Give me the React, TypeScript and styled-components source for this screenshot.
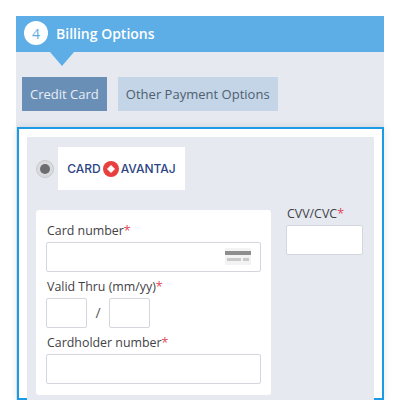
import React from 'react';
import styled, { createGlobalStyle } from 'styled-components';

const Global = createGlobalStyle`
    html, body {
        margin: 0;
        height: 400px;
        overflow: hidden;
        background: #fff;
        font-family: "Open Sans", "Liberation Sans", sans-serif;
    }
`;

const Panel = styled.section`
    margin: 16px 16px 0;
    height: 384px;
    background: #e6e9ef;
`;

const Header = styled.header`
    position: relative;
    height: 36px;
    box-sizing: border-box;
    padding: 0 0 2px 8px;
    display: flex;
    align-items: center;
    gap: 8px;
    background: #5dade6;
    color: #fff;
    font-size: 14px;
    font-weight: 600;

    &::after {
        content: '';
        position: absolute;
        left: 34px;
        top: 36px;
        border-left: 12.5px solid transparent;
        border-right: 12.5px solid transparent;
        border-top: 14px solid #5dade6;
    }
`;

const StepBadge = styled.span`
    width: 24px;
    height: 24px;
    border-radius: 50%;
    background: #fff;
    color: #5dade6;
    font-size: 14px;
    font-weight: 400;
    display: flex;
    align-items: center;
    justify-content: center;
`;

const Tabs = styled.nav`
    display: flex;
    gap: 11px;
    padding: 25px 0 16px 6px;
`;

const Tab = styled.div<{ $active?: boolean }>`
    height: 34px;
    padding: 0 8px;
    display: flex;
    align-items: center;
    font-size: 13px;
    letter-spacing: 0.01px;
    background: ${(p) => (p.$active ? '#6a8fb6' : '#c3d5e7')};
    color: ${(p) => (p.$active ? '#e8eef5' : '#4f5f70')};
`;

const Outline = styled.div`
    margin-left: 1px;
    height: 273px;
    box-sizing: border-box;
    border: 2px solid #1b9ae6;
    background: #fff;
    padding: 8px 8px 0;
    box-shadow: 0 0 8px rgba(0, 0, 0, 0.1);
`;

const Inner = styled.div`
    height: 263px;
    background: #e6e9ef;
    padding: 10px 11px 0 9px;
`;

const LogoRow = styled.div`
    display: flex;
    align-items: center;
    gap: 4px;
    margin-bottom: 20px;
`;

const Radio = styled.span`
    width: 18px;
    height: 18px;
    box-sizing: border-box;
    border: 1px solid #c8cacd;
    border-radius: 50%;
    background: #d9dbde;
    display: flex;
    align-items: center;
    justify-content: center;

    &::after {
        content: '';
        width: 10px;
        height: 10px;
        border-radius: 50%;
        background: #6b6d70;
    }
`;

const Logo = styled.div`
    width: 127px;
    height: 43px;
    background: #fff;
    display: flex;
    align-items: center;
    justify-content: center;
    gap: 2px;
    color: #2c4484;
    font-family: Inter, "Open Sans", sans-serif;
    font-size: 12px;
    font-weight: 500;
`;

const Columns = styled.div`
    display: flex;
    gap: 15px;
`;

const CardForm = styled.div`
    width: 235px;
    height: 185px;
    box-sizing: border-box;
    padding: 11px 10px 0 10px;
    background: #fff;
    border-radius: 3px;
`;

const Label = styled.div`
    height: 21px;
    line-height: 19px;
    font-size: 12.4px;
    padding-left: 1px;
    color: #3f4246;
    white-space: nowrap;

    b {
        color: #e4485c;
        font-weight: 400;
    }
`;

const Input = styled.div<{ $w?: number }>`
    position: relative;
    width: ${(p) => (p.$w ? `${p.$w}px` : '100%')};
    height: 30px;
    box-sizing: border-box;
    border: 1px solid #d3d7dd;
    border-radius: 2px;
    background: #fff;
    margin-bottom: 5px;
`;

const CardGlyph = styled.svg`
    position: absolute;
    right: 9px;
    top: 5px;
`;

const ExpiryRow = styled.div`
    display: flex;
    align-items: flex-start;
`;

const Slash = styled.span`
    width: 22px;
    text-align: center;
    line-height: 30px;
    font-size: 14px;
    color: #55585c;
`;

const CvvBlock = styled.div`
    margin-top: -6px;
`;

export default function App() {
    return (
        <>
            <Global />
            <Panel>
                <Header>
                    <StepBadge>4</StepBadge>
                    Billing Options
                </Header>
                <Tabs>
                    <Tab $active>Credit Card</Tab>
                    <Tab>Other Payment Options</Tab>
                </Tabs>
                <Outline>
                    <Inner>
                        <LogoRow>
                            <Radio />
                            <Logo>
                                CARD
                                <svg width="16" height="16" viewBox="0 0 16 16">
                                    <circle cx="8" cy="8" r="8" fill="#e8403f" />
                                    <path d="M8 4.5l3.5 3.5-3.5 3.5-3.5-3.5z" fill="#fff" stroke="#fff" strokeLinejoin="round" />
                                </svg>
                                AVANTAJ
                            </Logo>
                        </LogoRow>
                        <Columns>
                            <CardForm>
                                <Label>Card number<b>*</b></Label>
                                <Input>
                                    <CardGlyph width="26" height="17" viewBox="0 0 26 17">
                                        <rect width="26" height="17" fill="#f3f3f3" />
                                        <rect y="3" width="26" height="4" fill="#8e8e8e" />
                                        <rect x="2" y="10" width="14" height="3" fill="#c9c9c9" />
                                        <rect x="18" y="10" width="6" height="3" fill="#c9c9c9" />
                                    </CardGlyph>
                                </Input>
                                <Label>Valid Thru (mm/yy)<b>*</b></Label>
                                <ExpiryRow>
                                    <Input $w={41} />
                                    <Slash>/</Slash>
                                    <Input $w={41} />
                                </ExpiryRow>
                                <Label>Cardholder number<b>*</b></Label>
                                <Input />
                            </CardForm>
                            <CvvBlock>
                                <Label>CVV/CVC<b>*</b></Label>
                                <Input $w={77} />
                            </CvvBlock>
                        </Columns>
                    </Inner>
                </Outline>
            </Panel>
        </>
    );
}
